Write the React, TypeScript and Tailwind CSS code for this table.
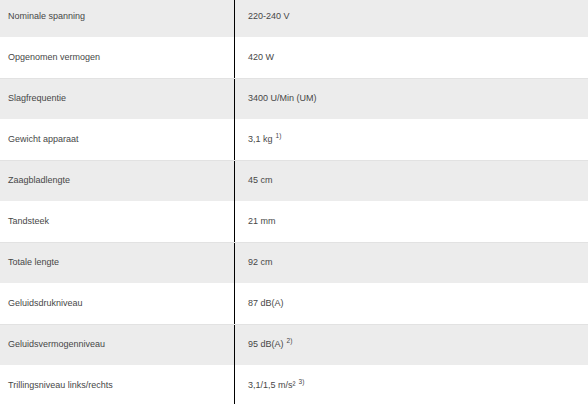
/**
 * Specs table - technische gegevens
 */
import React from 'react';

type Spec = { label: string; value: string; note?: string };

const specs: Spec[] = [
  { label: 'Nominale spanning', value: '220-240 V' },
  { label: 'Opgenomen vermogen', value: '420 W' },
  { label: 'Slagfrequentie', value: '3400 U/Min (UM)' },
  { label: 'Gewicht apparaat', value: '3,1 kg', note: '1)' },
  { label: 'Zaagbladlengte', value: '45 cm' },
  { label: 'Tandsteek', value: '21 mm' },
  { label: 'Totale lengte', value: '92 cm' },
  { label: 'Geluidsdrukniveau', value: '87 dB(A)' },
  { label: 'Geluidsvermogenniveau', value: '95 dB(A)', note: '2)' },
  { label: 'Trillingsniveau links/rechts', value: '3,1/1,5 m/s²', note: '3)' },
];

const App: React.FC = () => {
  return (
    <div className="w-[588px] h-[404px] overflow-hidden bg-white font-['Liberation_Sans',sans-serif] text-[9px] text-[#474747]">
      <div className="-mt-[4px] flex flex-col">
        {specs.map((s, i) => (
          <div
            key={s.label}
            className={
              i % 2 === 0
                ? 'flex h-[41px] bg-[#ececec] border-t border-[#e2e2e2]'
                : 'flex h-[41px] bg-white'
            }
          >
            <div className="w-[235px] shrink-0 flex items-center pl-[8px] border-r border-black">
              {s.label}
            </div>
            <div className="flex-1 flex items-center pl-[13px]">
              <span>
                {s.value}
                {s.note && <sup className="ml-[3px] text-[6.5px] relative -top-[4px]">{s.note}</sup>}
              </span>
            </div>
          </div>
        ))}
      </div>
    </div>
  );
};

export default App;
